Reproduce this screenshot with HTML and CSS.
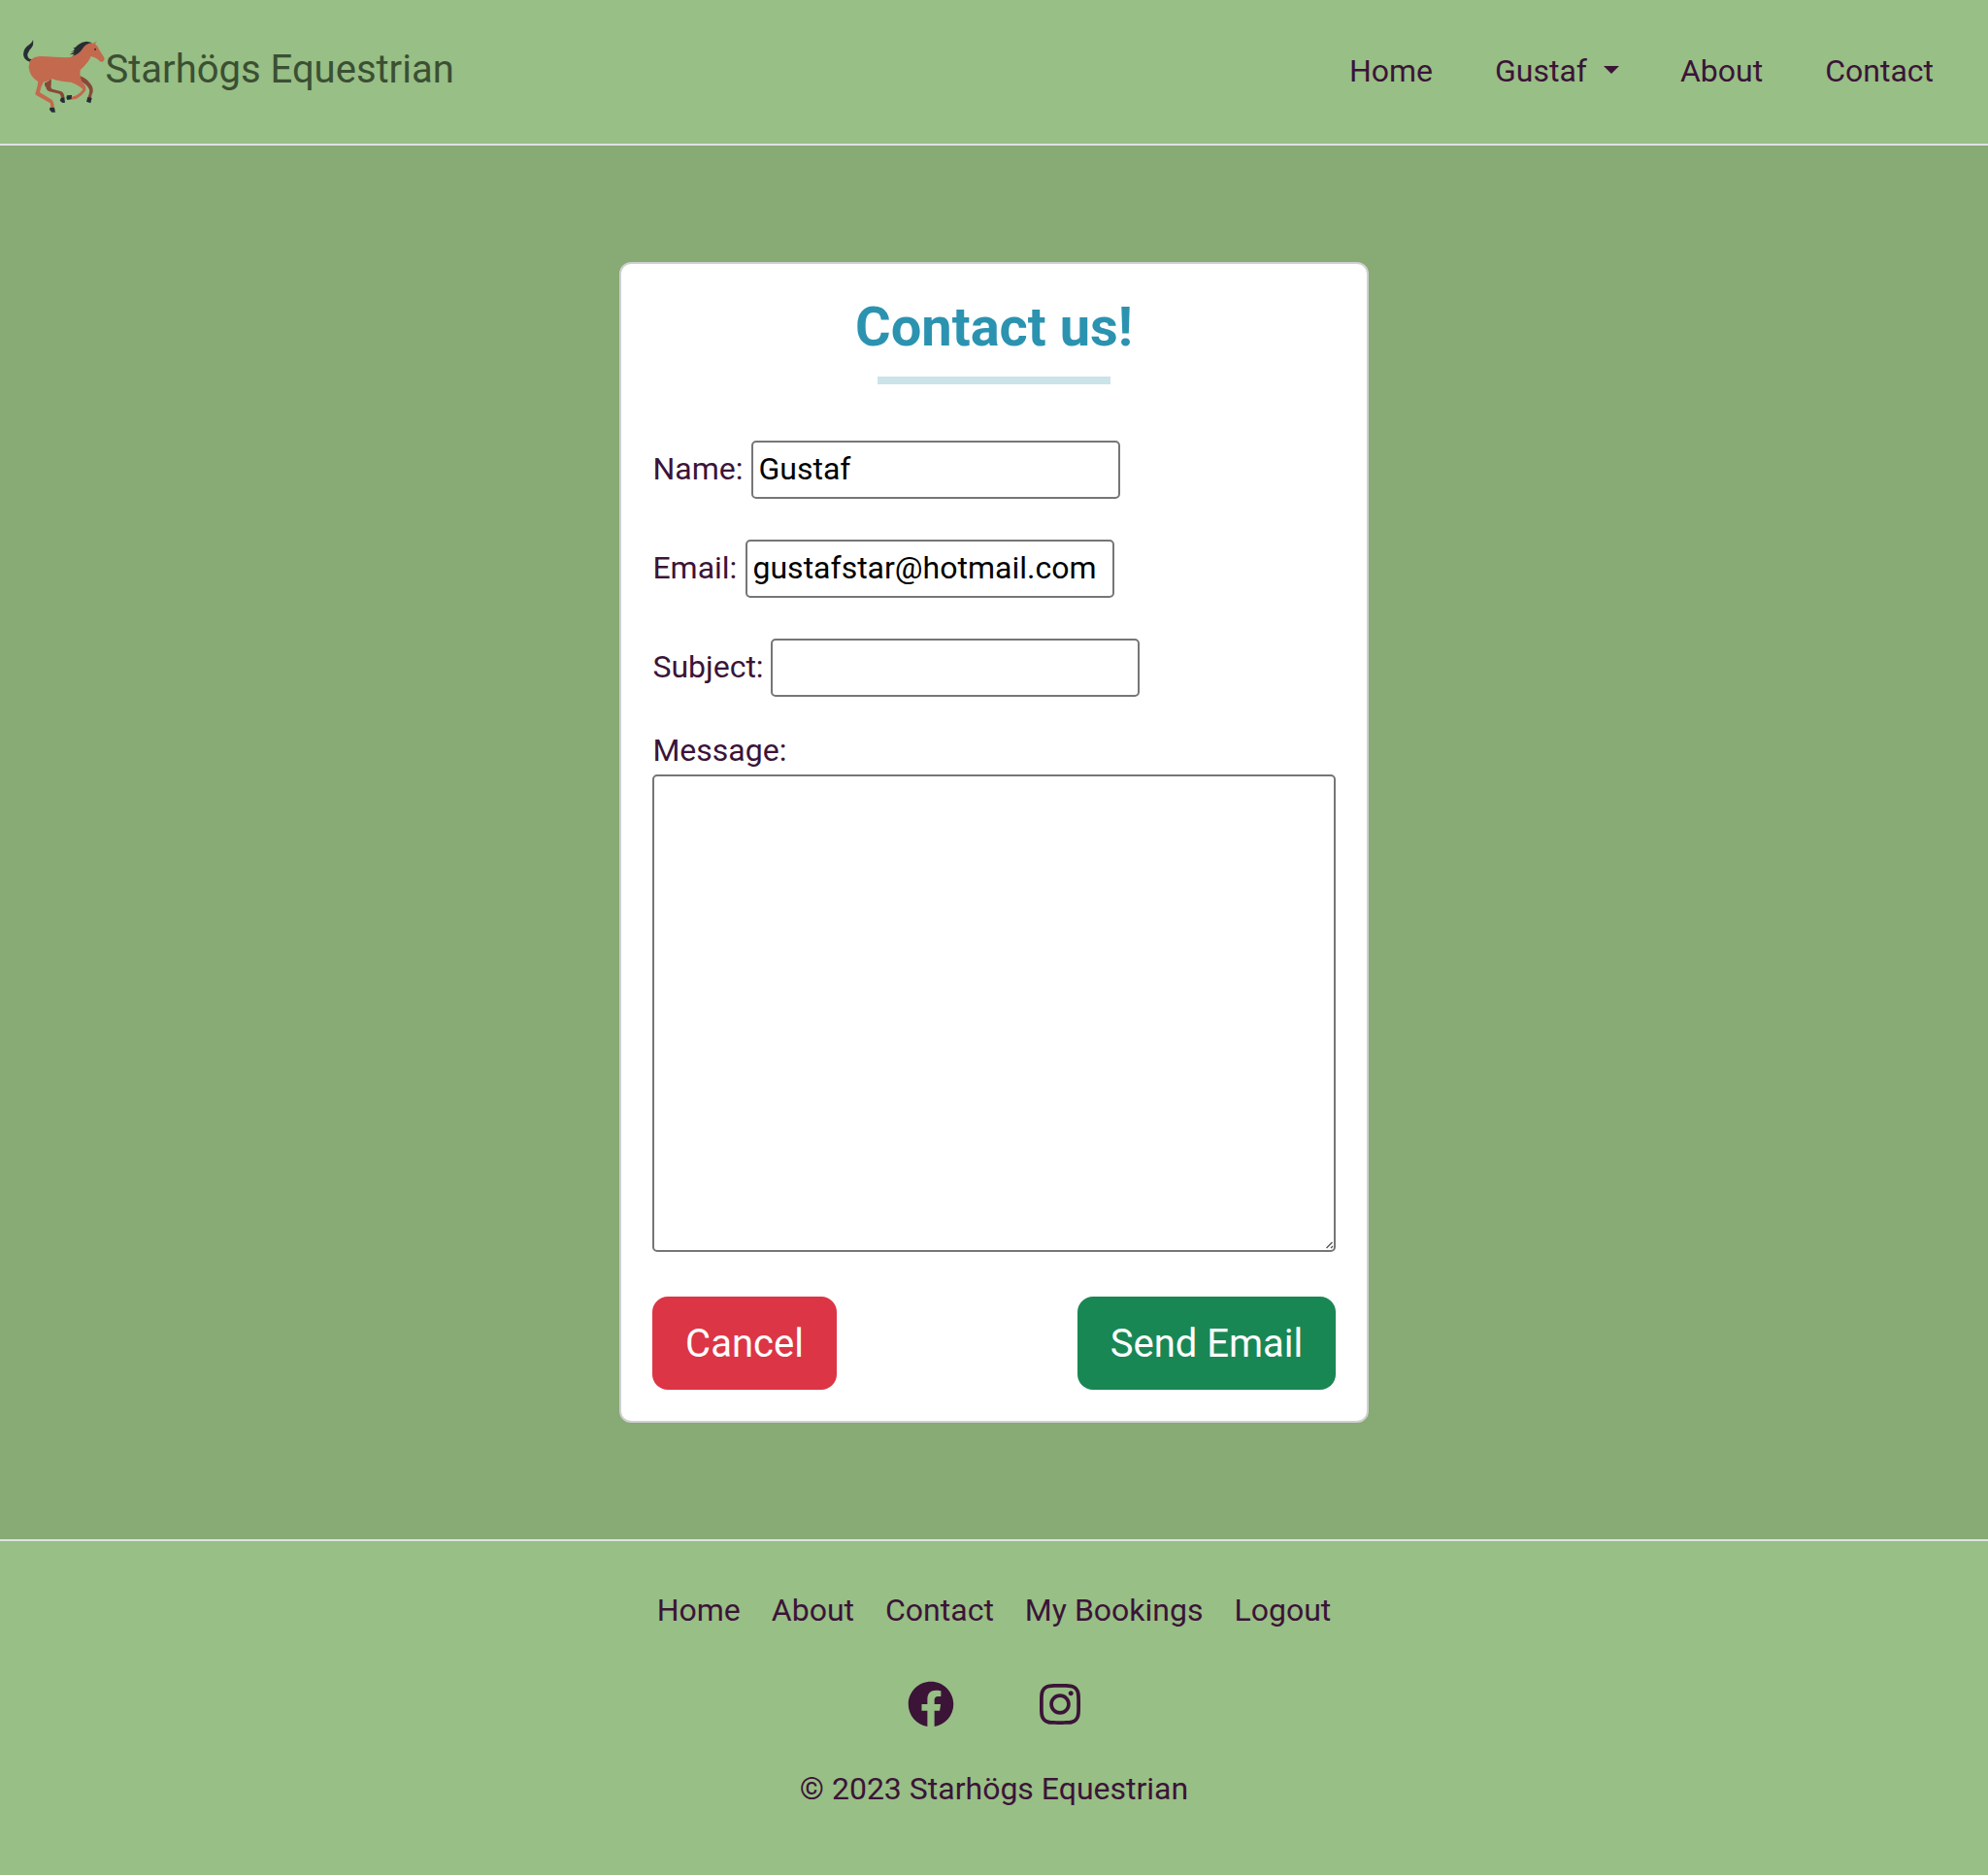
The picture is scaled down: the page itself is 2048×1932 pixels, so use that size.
FILE: index.html
```html
<!DOCTYPE html>
<html lang="en">
<head>
<meta charset="utf-8">
<title>Starhögs Equestrian</title>
<link rel="stylesheet" href="styles.css">
</head>
<body>
<header class="site-header">
  <a class="brand">
    <svg class="brand-logo" viewBox="72 60 252 228" aria-hidden="true">
      <path fill="#894837" d="M138 196Q154 190 159 182L158 203Q155 211 161 215L190 223Q199 227 199 244L188 245Q190 235 184 230L150 222Q142 218 142 209Q136 204 138 196zM246 174Q268 182 278 197Q289 209 287 224Q282 234 282 244L271 242Q278 226 276 217Q270 202 251 191z"/>
      <path fill="#c3694e" d="M89 148Q88 116 122 114Q170 116 205 118Q228 118 241 103Q258 76 279 73L290 74Q291 71 289 69L293 72L299 66Q297 71 294 76Q304 84 306 93L322 118Q325 126 317 131Q308 132 305 125Q296 118 281 114Q276 130 248 157Q247 168 248 178Q251 193 261 202Q268 211 264 221Q253 236 237 245Q227 248 220 247L222 239Q233 238 242 231Q253 223 256 216Q252 208 220 194Q186 193 159 183Q151 192 135 193Q126 208 123 226L158 247Q167 252 167 273L155 274Q158 263 154 258L113 235Q108 232 110 226Q116 208 118 193Q91 176 89 148z"/>
      <path fill="#262e34" d="M102 62Q105 78 97 88Q88 98 85 107Q84 122 98 123Q93 126 92 131Q74 126 72 109Q73 90 86 81Q100 72 102 62zM285 73Q264 74 254 92Q245 106 223 114L230 107L215 109Q225 104 230 99L218 101Q228 98 231 92L226 88Q234 88 241 79Q262 61 285 73zM188 244L199 241L201 257L193 258L185 251zM207 235L222 234L221 247L208 249L205 243zM271 240L284 243L280 259L267 254zM154 273L168 272L171 287L160 287L153 279z"/>
      <path fill="#5b2d24" d="M291 89l6 1v6l-5-1z"/>
    </svg>
    <span class="brand-name">Starhögs Equestrian</span>
  </a>
  <nav class="main-nav">
    <a>Home</a>
    <a class="dropdown">Gustaf</a>
    <a>About</a>
    <a>Contact</a>
  </nav>
</header>
<main class="content">
  <form class="card">
    <h1 class="card-title">Contact us!</h1>
    <div class="title-rule"></div>
    <div class="field field-name"><label for="name">Name:</label><input id="name" type="text" value="Gustaf"></div>
    <div class="field field-email"><label for="email">Email:</label><input id="email" type="text" value="gustafstar@hotmail.com"></div>
    <div class="field field-subject"><label for="subject">Subject:</label><input id="subject" type="text"></div>
    <div class="message">
      <label for="message">Message:</label>
      <textarea id="message"></textarea>
      <svg class="grip" viewBox="0 0 8 8" aria-hidden="true"><path d="M.5 7L6.5 1M5 7l2-2"/></svg>
    </div>
    <div class="actions">
      <button class="btn btn-cancel" type="button">Cancel</button>
      <button class="btn btn-send" type="button">Send Email</button>
    </div>
  </form>
</main>
<footer class="site-footer">
  <nav class="footer-nav"><a>Home</a><a>About</a><a>Contact</a><a>My Bookings</a><a>Logout</a></nav>
  <div class="social">
    <svg class="facebook" viewBox="0 0 512 512" role="img" aria-label="Facebook"><path d="M504 256C504 119 393 8 256 8S8 119 8 256c0 123.78 90.69 226.38 209.25 245V327.69h-63V256h63v-54.64c0-62.15 37-96.48 93.67-96.48 27.14 0 55.52 4.84 55.52 4.84v61h-31.28c-30.8 0-40.41 19.12-40.41 38.73V256h68.78l-11 71.69h-57.78V501C413.31 482.38 504 379.78 504 256z"/></svg>
    <svg class="instagram" viewBox="0 0 448 512" role="img" aria-label="Instagram"><path d="M224.1 141c-63.6 0-114.9 51.3-114.9 114.9s51.3 114.9 114.9 114.9S339 319.5 339 255.9 287.7 141 224.1 141zm0 189.6c-41.1 0-74.7-33.5-74.7-74.7s33.5-74.7 74.7-74.7 74.7 33.5 74.7 74.7-33.6 74.7-74.7 74.7zm146.4-194.3c0 14.9-12 26.8-26.8 26.8-14.9 0-26.8-12-26.8-26.8s12-26.8 26.8-26.8 26.8 12 26.8 26.8zm76.1 27.2c-1.7-35.9-9.9-67.7-36.2-93.9-26.2-26.2-58-34.4-93.9-36.2-37-2.1-147.9-2.1-184.9 0-35.8 1.7-67.6 9.9-93.9 36.1s-34.4 58-36.2 93.9c-2.1 37-2.1 147.9 0 184.9 1.7 35.9 9.9 67.7 36.2 93.9s58 34.4 93.9 36.2c37 2.1 147.9 2.1 184.9 0 35.9-1.7 67.7-9.9 93.9-36.2 26.2-26.2 34.4-58 36.2-93.9 2.1-37 2.1-147.8 0-184.8zM398.8 388c-7.8 19.6-22.9 34.7-42.6 42.6-29.5 11.7-99.5 9-132.1 9s-102.7 2.6-132.1-9c-19.6-7.8-34.7-22.9-42.6-42.6-11.7-29.5-9-99.5-9-132.1s-2.6-102.7 9-132.1c7.8-19.6 22.9-34.7 42.6-42.6 29.5-11.7 99.5-9 132.1-9s102.7-2.6 132.1 9c19.6 7.8 34.7 22.9 42.6 42.6 11.7 29.5 9 99.5 9 132.1s2.7 102.7-9 132.1z"/></svg>
  </div>
  <p class="copyright">© 2023 Starhögs Equestrian</p>
</footer>
</body>
</html>
```
FILE: styles.css
```css
* { box-sizing: border-box; }

body {
  margin: 0;
  min-height: 1932px;
  display: flex;
  flex-direction: column;
  background: #98bf85;
  color: #3b1438;
  font: 400 32px/48px Roboto, sans-serif;
}

.site-header {
  height: 150px;
  padding: 40px 56px 32px 24px;
  display: flex;
  justify-content: space-between;
  align-items: flex-start;
  border-bottom: 2px solid #dee2e6;
}

.brand { display: flex; }
.brand-logo { width: 84px; height: 76px; }
.brand-name { padding: 2px 0 0 0.5px; color: #3b4f33; font-size: 40px; line-height: 60px; }

.main-nav { display: flex; gap: 64px; padding-top: 9px; }
.dropdown { display: flex; align-items: center; }
.dropdown::after {
  content: "";
  margin: -3px -1px 0 17px;
  border: 8px solid transparent;
  border-top-color: currentColor;
  border-bottom: 0;
}

.content {
  height: 1436px;
  padding-top: 120px;
  background: #88aa75;
}

.card {
  width: 772px;
  height: 1196px;
  margin: 0 auto;
  padding: 32px;
  border: 2px solid #d0d0d0;
  border-radius: 12px;
  background: #fff;
}

.card-title {
  margin: 0;
  color: #2b93b0;
  font-size: 56px;
  line-height: 67px;
  font-weight: 700;
  text-align: center;
}

.title-rule { width: 240px; height: 8px; margin: 17px auto 58px; background: #cae4e9; }

.field { display: flex; align-items: center; height: 60px; margin-bottom: 42px; }
.field label { padding: 0 0 2px 0.4px; }
.field-name label { width: 102px; }
.field-email label { width: 96px; }
.field-subject label { width: 122px; }
.field input {
  width: 380px;
  height: 60px;
  padding: 2px 5.5px 4px;
  color: #000;
  font: inherit;
}
.field input,
.message textarea {
  border: 2px solid #767676;
  border-radius: 5px;
  background: #fff;
  outline: 0;
}

.message { position: relative; margin-top: -11px; }
.message label { display: block; height: 49px; padding-left: 0.4px; }
.message textarea {
  display: block;
  width: 704px;
  height: 492px;
  resize: none;
  font: inherit;
}
.grip {
  position: absolute;
  right: 2px;
  bottom: 3px;
  width: 8px;
  height: 8px;
  fill: none;
  stroke: #555;
  stroke-width: 1.4;
}

.actions { display: flex; justify-content: space-between; margin-top: 46px; }
.btn {
  height: 96px;
  padding: 2px 0 0;
  border: 0;
  border-radius: 16px;
  color: #fff;
  font: 400 40px/60px Roboto, sans-serif;
}
.btn-cancel { width: 190px; background: #dc3545; }
.btn-send { width: 266px; background: #198754; }

.site-footer {
  flex: 1;
  padding-top: 47px;
  border-top: 2px solid #dee2e6;
  display: flex;
  flex-direction: column;
  align-items: center;
}
.footer-nav { display: flex; gap: 32px; }
.social { display: flex; gap: 88px; margin: 49px 0 39px; fill: currentColor; }
.facebook { width: 48px; height: 48px; }
.instagram { width: 42px; height: 48px; }
.copyright { margin: 0; }
```
